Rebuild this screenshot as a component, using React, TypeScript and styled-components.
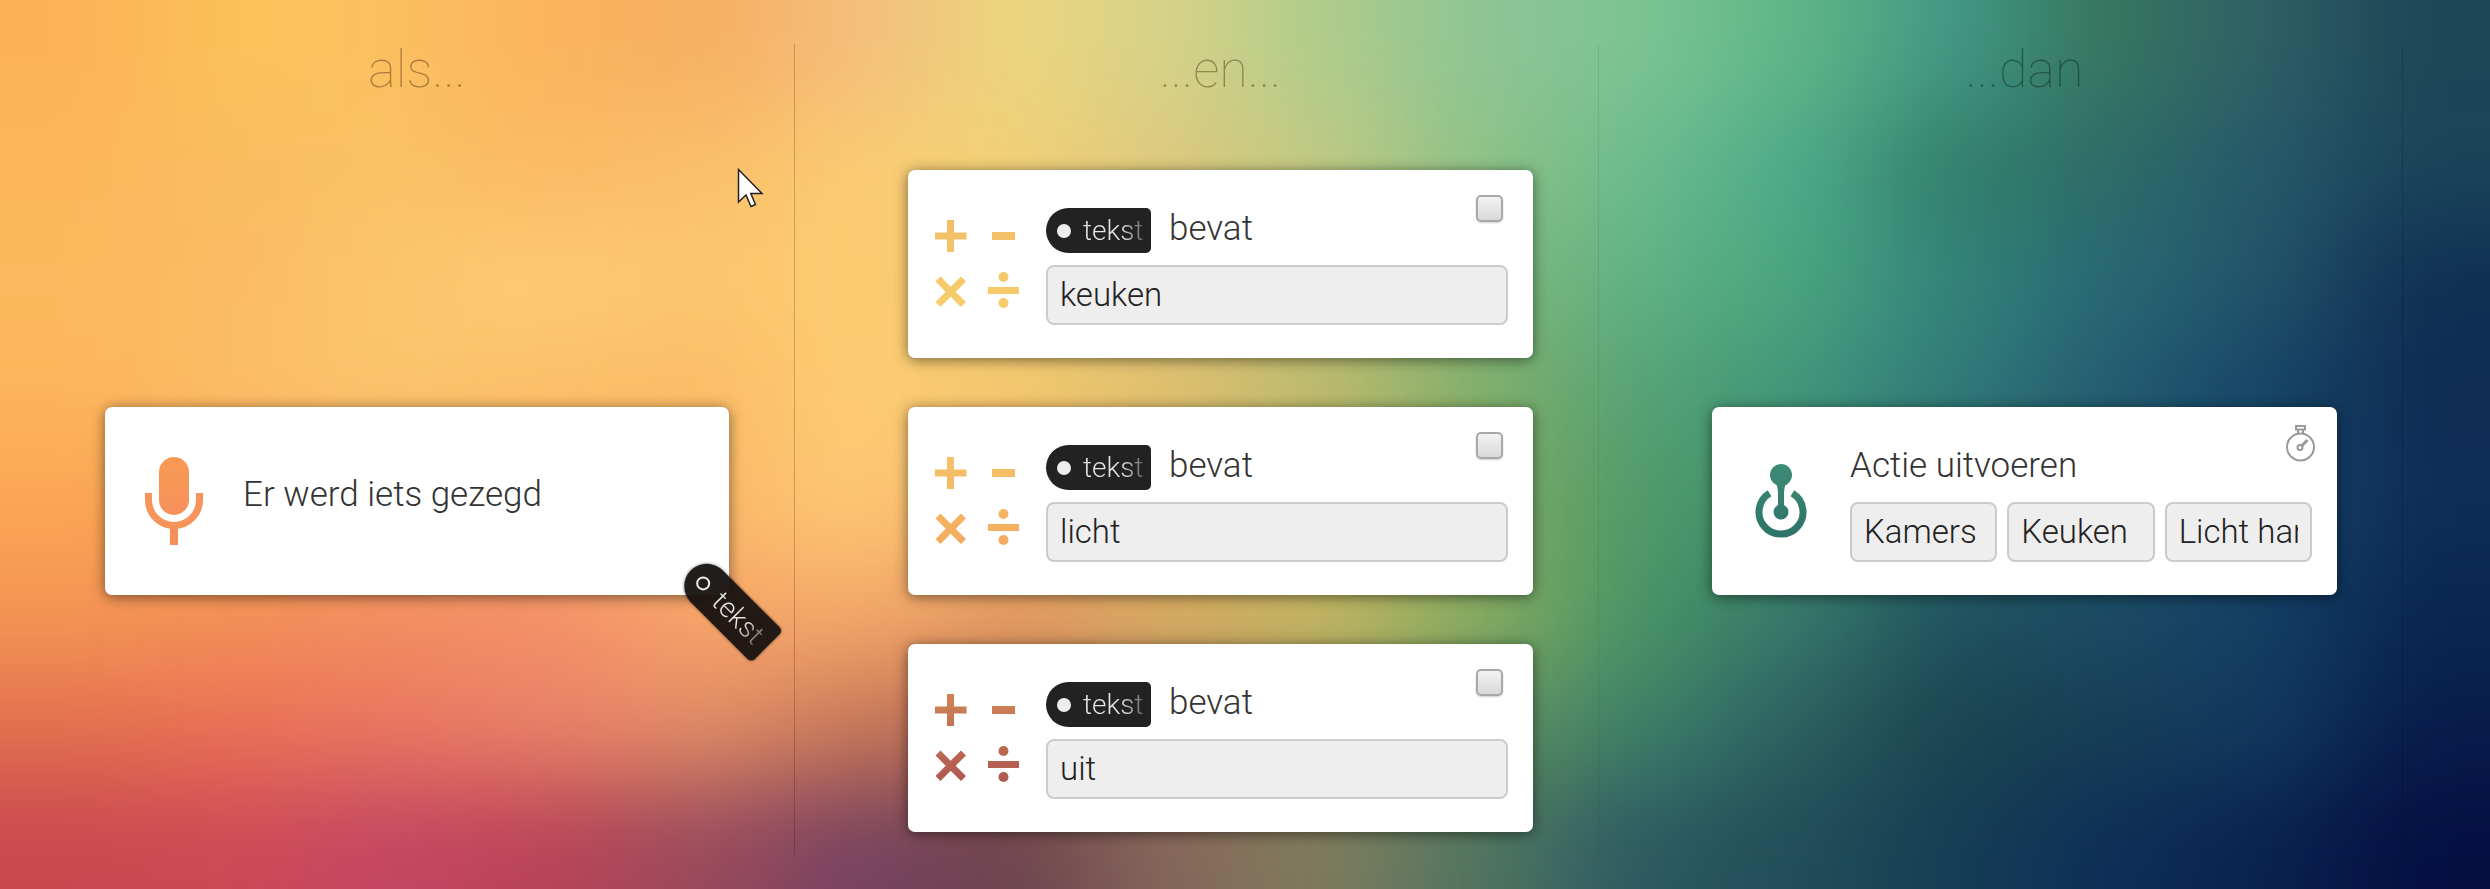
import React from "react";
import styled, { createGlobalStyle } from "styled-components";

const GlobalStyle = createGlobalStyle`
  *, *::before, *::after { box-sizing: border-box; }
  body {
    margin: 0;
    background: #fbb75c;
    color: #333;
    font-family: Roboto, "Noto Sans", sans-serif;
    font-weight: 300;
  }
`;

/* ---------- wallpaper ---------- */

const WALLPAPER: string[][] = [
  ["#fdb256", "#fbc25a", "#fbc060", "#fcb45c", "#f7af62", "#f4be7c", "#ebd57e", "#d6d288", "#aecc8a", "#8ec496", "#7cc492", "#5eb686", "#419884", "#36765e", "#2f6066", "#1c4656"],
  ["#fdb65a", "#fabd60", "#f8c264", "#fcba64", "#f9bf6a", "#fbcb72", "#f2d078", "#dcc87c", "#c0c984", "#8ec286", "#6cbb8c", "#4baa8c", "#327f68", "#2d6c68", "#25586a", "#1a4459"],
  ["#fdb85c", "#fbbb64", "#fbc66c", "#fccb74", "#fbc76e", "#fdcc70", "#eeca72", "#d8c478", "#b8c078", "#80b67a", "#60b284", "#48a67e", "#33847a", "#286874", "#225468", "#102f53"],
  ["#fdb45a", "#fbbe66", "#fac56c", "#fbc068", "#fbbc66", "#fdcc72", "#f4c86e", "#dfbf6e", "#bcb96c", "#80ae6a", "#56a276", "#40967a", "#317a7a", "#245c70", "#154468", "#102c54"],
  ["#faa654", "#f89e54", "#f6a45a", "#f7aa5e", "#fbb868", "#fdc876", "#f5b268", "#dcb466", "#b8b466", "#80aa64", "#4f9a68", "#3f8e6c", "#2c6a68", "#20566a", "#164668", "#0f2c58"],
  ["#f49454", "#f39056", "#f38e60", "#f4906a", "#f7a468", "#f5a868", "#e69a60", "#daac60", "#c6b760", "#86ac60", "#479466", "#37786a", "#1f5260", "#1c4a64", "#133f64", "#0a2650"],
  ["#e2704e", "#ea7056", "#e97660", "#e98068", "#e08c66", "#c87658", "#ac6854", "#a08060", "#90905e", "#62905e", "#3c8068", "#2c5f60", "#1a454e", "#163e54", "#123860", "#081c4c"],
  ["#c94850", "#cc4a56", "#c44662", "#b94356", "#994a5c", "#784260", "#6c444e", "#86665a", "#7e7c5c", "#4f7460", "#2c5a62", "#214e58", "#153e54", "#0f2e58", "#0a2250", "#040f42"],
];

const CELL_W = 156;
const CELL_H = 112;

const Backdrop = styled.svg`
  position: absolute;
  inset: 0;
  z-index: -1;
  width: 100%;
  height: 100%;
`;

/* Colour cells; the outer ones reach past the edge so that the blur stays opaque there. */
function Wallpaper() {
  const lastCol = WALLPAPER[0].length - 1;
  const lastRow = WALLPAPER.length - 1;
  return (
    <Backdrop viewBox="0 0 2490 889" preserveAspectRatio="none" aria-hidden="true">
      <filter id="soften" filterUnits="userSpaceOnUse" x="-400" y="-400" width="3290" height="1690" colorInterpolationFilters="sRGB">
        <feGaussianBlur stdDeviation="60 46" />
      </filter>
      <g filter="url(#soften)">
        {WALLPAPER.map((row, r) =>
          row.map((fill, c) => {
            const left = c === 0 ? -300 : c * CELL_W;
            const right = c === lastCol ? 2800 : (c + 1) * CELL_W + 1;
            const top = r === 0 ? -300 : r * CELL_H;
            const bottom = r === lastRow ? 1200 : (r + 1) * CELL_H + 1;
            return <rect key={`${r}-${c}`} x={left} y={top} width={right - left} height={bottom - top} fill={fill} />;
          })
        )}
      </g>
    </Backdrop>
  );
}

/* ---------- board ---------- */

const Board = styled.main`
  position: relative;
  isolation: isolate;
  overflow: hidden;
  display: grid;
  grid-template-columns: 795fr 804fr 804fr 87fr;
  min-height: 100vh;
  padding: 44px 0 34px;
`;

const Column = styled.section<{ $first?: boolean; $line: number }>`
  display: flex;
  flex-direction: column;
  min-width: 0;
  padding: 0 65px 0 ${(p) => (p.$first ? 105 : 113)}px;
  border-right: 1px solid rgba(0, 0, 0, ${(p) => p.$line});
`;

const Heading = styled.h2`
  height: 103px;
  margin: 0;
  color: rgba(60, 30, 0, 0.42);
  font-size: 52px;
  font-weight: 100;
  line-height: 52px;
  text-align: center;
`;

const DarkHeading = styled(Heading)`
  color: rgba(0, 20, 20, 0.4);
`;

const Stack = styled.div`
  flex: 1;
  display: flex;
  flex-direction: column;
  justify-content: center;
  gap: 49px;
`;

const Card = styled.article`
  position: relative;
  display: grid;
  grid-template-columns: 138px minmax(0, 1fr);
  min-height: 188px;
  background: #fff;
  border-radius: 7px;
  box-shadow: 0 2px 14px rgba(0, 0, 0, 0.5);
`;

const IconCell = styled.div`
  display: flex;
  align-items: center;
  justify-content: center;
`;

const Content = styled.div<{ $single?: boolean }>`
  display: flex;
  flex-direction: column;
  justify-content: center;
  gap: 12px;
  padding: 38px 25px ${(p) => (p.$single ? 47 : 33)}px 0;
`;

const Line = styled.div`
  display: flex;
  gap: 18px;
  min-height: 45px;
  font-size: 35px;
  line-height: 41px;
`;

const Fields = styled.div`
  display: flex;
  gap: 10px;
`;

const Field = styled.input`
  flex: 1;
  width: 100%;
  min-width: 0;
  height: 60px;
  padding: 0 12px 2px;
  border: 2px solid #cbcbcb;
  border-radius: 8px;
  background: #eee;
  color: #222;
  font: inherit;
  font-size: 33px;
  outline: none;
`;

const Tag = styled.span<{ $attached?: boolean }>`
  display: flex;
  align-items: center;
  gap: 12px;
  width: 105px;
  height: 45px;
  padding-left: 11px;
  border-radius: 23px 5px 5px 23px;
  background: #222;
  font-size: 28px;
  line-height: 40px;
  ${(p) =>
    p.$attached &&
    `
    position: absolute;
    right: -54px;
    bottom: -36px;
    width: 108px;
    background: rgba(22, 18, 16, 0.95);
    box-shadow: 0 0 3px rgba(0, 0, 0, 0.6);
    transform: rotate(45deg);
  `}
`;

const Hole = styled.i<{ $ring?: boolean }>`
  width: 14px;
  height: 14px;
  border: 2px solid #eee;
  border-radius: 50%;
  background: ${(p) => (p.$ring ? "transparent" : "#eee")};
`;

const TagText = styled.span`
  color: transparent;
  background: linear-gradient(90deg, #e6e6e6 65%, #666 100%);
  background-clip: text;
  -webkit-background-clip: text;
`;

const Tick = styled.input`
  position: absolute;
  top: 25px;
  right: 30px;
  appearance: none;
  width: 27px;
  height: 27px;
  margin: 0;
  border: 2px solid #a8a8a8;
  border-radius: 5px;
  background: linear-gradient(#f2f2f2, #d9d9d9);
  box-shadow: 0 1px 2px rgba(0, 0, 0, 0.2);
`;

const TimerButton = styled.button`
  position: absolute;
  top: 17px;
  right: 21px;
  display: flex;
  padding: 0;
  border: 0;
  background: none;
`;

const Pointer = styled.svg`
  position: absolute;
  top: 168px;
  left: 737px;
`;

/* ---------- icons ---------- */

function MicIcon() {
  return (
    <svg width="58" height="88" viewBox="0 0 58 88" aria-hidden="true">
      <defs>
        <linearGradient id="mic" x1="0" y1="0" x2="0" y2="1">
          <stop offset="0" stopColor="#f79a52" />
          <stop offset="1" stopColor="#f7905c" />
        </linearGradient>
      </defs>
      <rect x="14" y="0" width="30" height="58" rx="15" fill="url(#mic)" />
      <path d="M3.500 36V43A25.500 25.500 0 0 0 54.500 43V36" fill="none" stroke="#f6945a" strokeWidth="7" />
      <path d="M29 68V88" stroke="#f6905a" strokeWidth="8" />
    </svg>
  );
}

function MathIcon({ id, from, to }: { id: string; from: string; to: string }) {
  return (
    <svg width="84" height="88" viewBox="0 0 84 88" aria-hidden="true">
      <defs>
        <linearGradient id={id} gradientUnits="userSpaceOnUse" x1="0" y1="0" x2="0" y2="88">
          <stop offset="0" stopColor={from} />
          <stop offset="1" stopColor={to} />
        </linearGradient>
      </defs>
      <g fill={`url(#${id})`}>
        <path d="M12 0h7v12.500h12.500v7H19V32h-7V19.500H0v-7h12z" />
        <path d="M57 12h23v8H57z" />
        <path d="M5.500 56.500 15.700 66.700 26 56.500 31 61.500 20.700 71.800 31 82 26 87 15.700 76.800 5.500 87 .5 82 10.700 71.800 .5 61.500z" />
        <path d="M53 67h31v7H53z" />
        <circle cx="68.500" cy="57" r="5" />
        <circle cx="68.500" cy="83" r="5" />
      </g>
    </svg>
  );
}

function ActionIcon() {
  return (
    <svg width="52" height="76" viewBox="0 0 52 76" aria-hidden="true">
      <defs>
        <linearGradient id="action" gradientUnits="userSpaceOnUse" x1="0" y1="0" x2="0" y2="76">
          <stop offset="0" stopColor="#3d8c76" />
          <stop offset="1" stopColor="#2c7268" />
        </linearGradient>
      </defs>
      <circle cx="26" cy="12" r="11" fill="url(#action)" />
      <path d="M21 20Q23 25 23 30V45H29V30Q29 25 31 20Z" fill="url(#action)" />
      <circle cx="26" cy="49" r="7.500" fill="url(#action)" />
      <path d="M14.600 30.300A22 22 0 1 0 37.400 30.300" fill="none" stroke="url(#action)" strokeWidth="7" />
    </svg>
  );
}

function StopwatchIcon() {
  return (
    <svg width="31" height="38" viewBox="0 0 31 38" fill="none" stroke="#999" strokeWidth="2" aria-hidden="true">
      <path d="M11 2H20V5.500H11ZM13 6V9M18 6V9" />
      <circle cx="15.500" cy="23" r="13.500" />
      <circle cx="15" cy="23.500" r="2.500" />
      <path d="M17 21.500 22.500 16" strokeWidth="3" />
    </svg>
  );
}

/* ---------- parts ---------- */

function TextTag({ attached }: { attached?: boolean }) {
  return (
    <Tag $attached={attached}>
      <Hole $ring={attached} />
      <TagText>tekst</TagText>
    </Tag>
  );
}

const CONDITIONS = [
  { value: "keuken", from: "#f2be68", to: "#f8cd6a" },
  { value: "licht", from: "#f6c268", to: "#f3ab5e" },
  { value: "uit", from: "#d08454", to: "#ae5850" },
];

const ACTION_STEPS = [
  { label: "Groep", value: "Kamers" },
  { label: "Kamer", value: "Keuken" },
  { label: "Apparaat", value: "Licht hanglamp" },
];

export default function App() {
  return (
    <>
      <GlobalStyle />
      <Board>
        <Wallpaper />
        <Column $first $line={0.2}>
          <Heading>als...</Heading>
          <Stack>
            <Card>
              <IconCell><MicIcon /></IconCell>
              <Content $single>
                <Line>Er werd iets gezegd</Line>
              </Content>
              <TextTag attached />
            </Card>
          </Stack>
        </Column>
        <Column $line={0.08}>
          <Heading>...en...</Heading>
          <Stack>
            {CONDITIONS.map((c) => (
              <Card key={c.value}>
                <IconCell><MathIcon id={`math-${c.value}`} from={c.from} to={c.to} /></IconCell>
                <Content>
                  <Line><TextTag />bevat</Line>
                  <Fields><Field defaultValue={c.value} aria-label="tekst bevat" /></Fields>
                </Content>
                <Tick type="checkbox" aria-label={`Voorwaarde ${c.value}`} />
              </Card>
            ))}
          </Stack>
        </Column>
        <Column $line={0.16}>
          <DarkHeading>...dan</DarkHeading>
          <Stack>
            <Card>
              <IconCell><ActionIcon /></IconCell>
              <Content>
                <Line>Actie uitvoeren</Line>
                <Fields>
                  {ACTION_STEPS.map((s) => (
                    <Field key={s.label} defaultValue={s.value} aria-label={s.label} />
                  ))}
                </Fields>
              </Content>
              <TimerButton type="button" aria-label="Timer"><StopwatchIcon /></TimerButton>
            </Card>
          </Stack>
        </Column>
        <Pointer width="28" height="40" viewBox="0 0 28 40" aria-hidden="true">
          <path d="M1.500 1.500V34L9 27L14 38.500L18.500 36.500L13.800 25.500H25Z" fill="#fff" stroke="#222" strokeWidth="1.500" />
        </Pointer>
      </Board>
    </>
  );
}
